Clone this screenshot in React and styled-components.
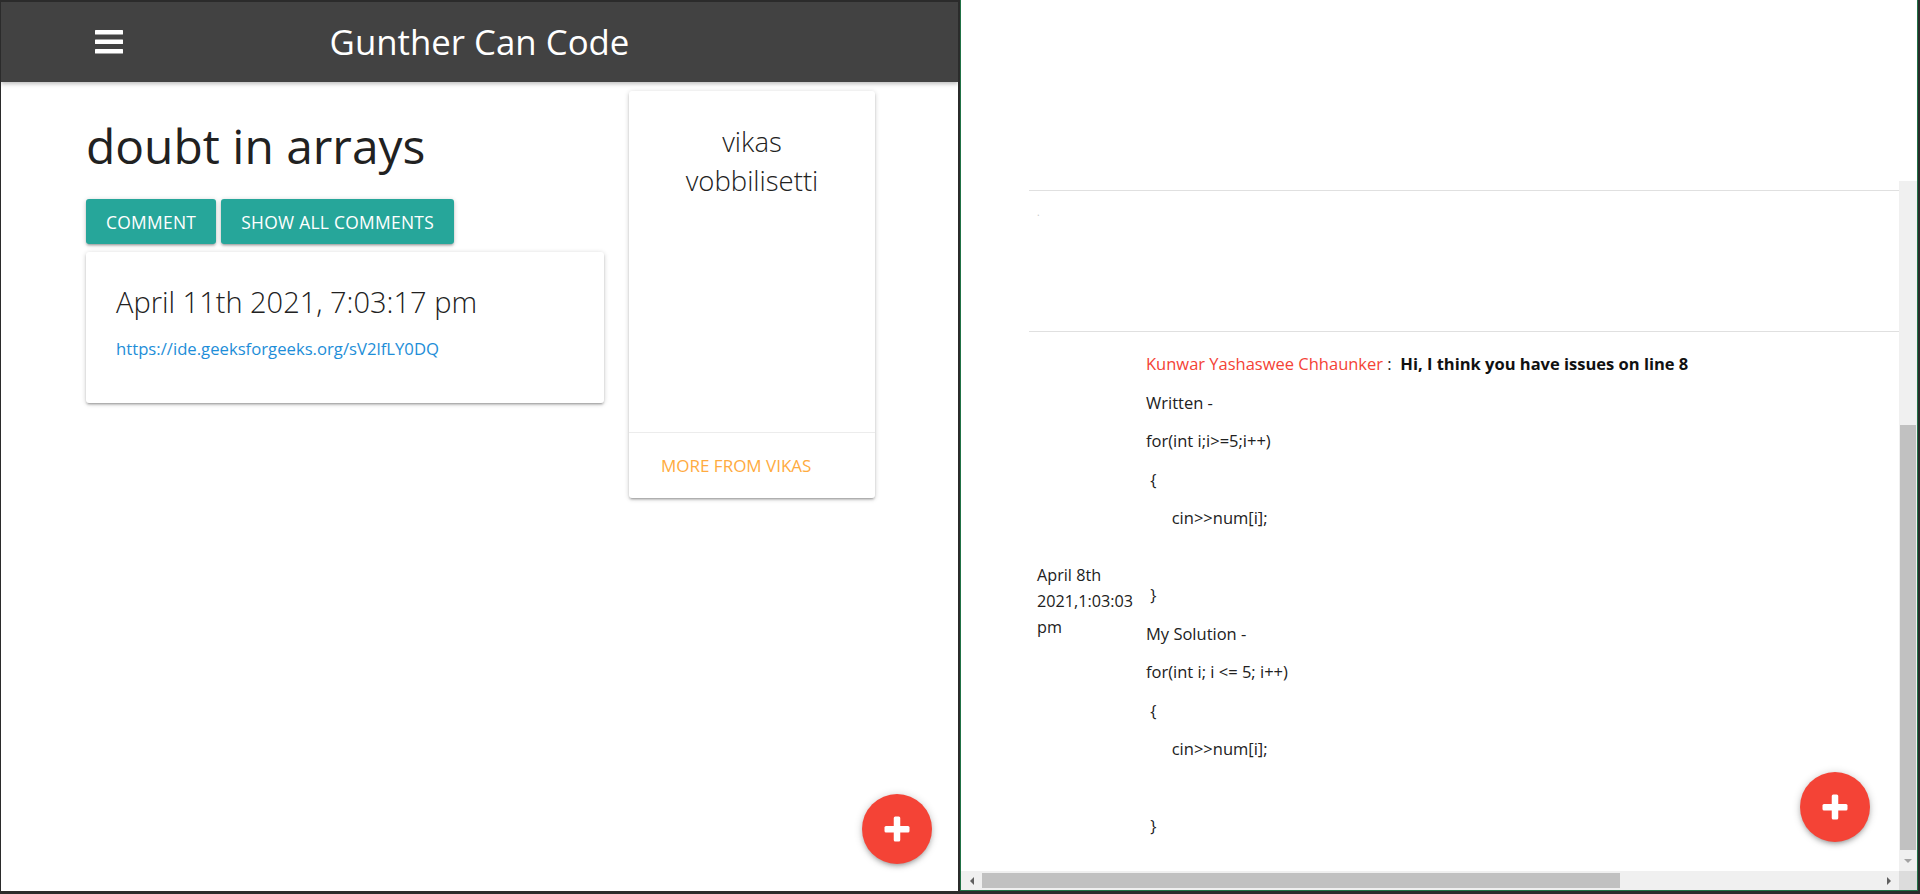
import React from 'react';
import styled, { createGlobalStyle } from 'styled-components';

const GlobalStyle = createGlobalStyle`
  html, body {
    margin: 0;
    padding: 0;
  }
  body {
    background: #2b2b2b;
    font-family: 'Open Sans', 'Noto Sans', sans-serif;
    overflow: hidden;
  }
  * {
    box-sizing: border-box;
  }
`;

const shadow1 = '0 2px 2px 0 rgba(0,0,0,0.14), 0 3px 1px -2px rgba(0,0,0,0.12), 0 1px 5px 0 rgba(0,0,0,0.2)';

const Desktop = styled.div`
  width: 1920px;
  height: 894px;
  display: flex;
  align-items: flex-start;
  background: #2b2b2b;
  overflow: hidden;
`;

/* ---------- left window ---------- */

const LeftWindow = styled.div`
  position: relative;
  width: 957px;
  height: 889px;
  margin: 2px 2px 0 1px;
  background: #fff;
  display: flex;
  flex-direction: column;
  overflow: hidden;
`;

const Navbar = styled.nav`
  height: 80px;
  flex: none;
  background: #424242;
  display: grid;
  grid-template-columns: 1fr auto 1fr;
  align-items: center;
  box-shadow: 0 2px 4px rgba(0,0,0,0.25);
  position: relative;
  z-index: 1;
`;

const MenuButton = styled.div`
  padding-left: 94px;
  display: flex;
  align-items: center;
  svg {
    display: block;
  }
`;

const Brand = styled.div`
  color: #fff;
  font-size: 34.8px;
  line-height: 80px;
  white-space: nowrap;
`;

const Main = styled.div`
  display: flex;
  align-items: flex-start;
  padding-left: 85px;
`;

const PostColumn = styled.div`
  width: 518px;
`;

const Title = styled.h1`
  margin: 38px 0 0;
  font-size: 47.9px;
  line-height: 52px;
  font-weight: 400;
  color: #212121;
`;

const ButtonRow = styled.div`
  display: flex;
  gap: 5px;
  margin-top: 27px;
`;

const Btn = styled.button`
  height: 45px;
  padding: 0 20px;
  border: none;
  border-radius: 3px;
  background: #26a69a;
  color: #fff;
  font-family: inherit;
  font-size: 17.4px;
  letter-spacing: 0.3px;
  text-transform: uppercase;
  box-shadow: ${shadow1};
`;

const Card = styled.div`
  background: #fff;
  border-radius: 3px;
  box-shadow: ${shadow1};
`;

const PostCard = styled(Card)`
  margin-top: 8px;
  height: 151px;
  padding: 30px;
`;

const PostDate = styled.div`
  font-size: 29px;
  font-weight: 300;
  line-height: 40px;
  color: #212121;
`;

const PostLink = styled.a`
  display: block;
  margin-top: 13px;
  font-size: 16.7px;
  line-height: 27px;
  color: #1e8ed8;
  text-decoration: none;
`;

const AuthorCard = styled(Card)`
  width: 246px;
  height: 407px;
  margin: 9px 0 0 25px;
  display: flex;
  flex-direction: column;
`;

const AuthorName = styled.div`
  flex: 1;
  padding: 31px 24px 0;
  text-align: center;
  font-size: 27.5px;
  font-weight: 300;
  line-height: 39px;
  color: #212121;
`;

const CardAction = styled.div`
  border-top: 1px solid rgba(160,160,160,0.2);
  padding: 18px 30px 17px 32px;
  font-size: 17px;
  line-height: 30px;
  color: #ffab40;
  text-transform: uppercase;
`;

const Fab = styled.button`
  position: absolute;
  right: ${p => p.$right}px;
  bottom: ${p => p.$bottom}px;
  width: 70px;
  height: 70px;
  border: none;
  border-radius: 50%;
  background: #f44336;
  display: flex;
  align-items: center;
  justify-content: center;
  box-shadow: 0 3px 4px 0 rgba(0,0,0,0.14), 0 3px 3px -2px rgba(0,0,0,0.12), 0 1px 8px 0 rgba(0,0,0,0.2);
  z-index: 2;
  svg {
    display: block;
  }
`;

/* ---------- right window ---------- */

const RightWindow = styled.div`
  width: 958px;
  height: 891px;
  border: 1px solid #217346;
  border-top: none;
  background: #fff;
  display: flex;
  flex-direction: column;
`;

const TopSpace = styled.div`
  height: 181px;
  flex: none;
`;

const ScrollPane = styled.div`
  flex: 1;
  display: grid;
  grid-template-columns: 1fr 18px;
  grid-template-rows: 1fr 19px;
  min-height: 0;
`;

const Viewport = styled.div`
  position: relative;
  overflow: hidden;
`;

const Table = styled.div`
  margin-left: 68px;
`;

const Row = styled.div`
  border-bottom: 1px solid #e0e0e0;
  height: ${p => p.$h}px;
`;

const Dot = styled.div`
  padding: 14px 0 0 8px;
  font-size: 10px;
  color: #c8c8c8;
`;

const CommentRow = styled.div`
  display: flex;
  align-items: center;
  padding-top: 13px;
`;

const DateCell = styled.div`
  width: 117px;
  flex: none;
  padding: 12px 5px 0 8px;
  font-size: 16.2px;
  line-height: 26px;
  color: #212121;
`;

const BodyCell = styled.div`
  font-size: 16.5px;
  color: #212121;
`;

const Line = styled.p`
  margin: 0;
  height: 38.5px;
  line-height: 38.5px;
  white-space: pre;
`;

const Author = styled.span`
  color: #f44336;
`;

const Strong = styled.b`
  font-weight: 700;
  color: #111;
`;

const VBar = styled.div`
  background: #f0f0f0;
  display: flex;
  flex-direction: column;
  padding: 0 1px;
`;

const VThumb = styled.div`
  margin-top: 244px;
  height: 425px;
  background: #c1c1c1;
`;

const ArrowBox = styled.div`
  flex: 1;
  display: flex;
  align-items: center;
  justify-content: center;
`;

const HBar = styled.div`
  background: #f0f0f0;
  display: flex;
  align-items: center;
`;

const HArrow = styled.div`
  width: 21px;
  height: 19px;
  display: flex;
  align-items: center;
  justify-content: center;
  flex: none;
`;

const HThumb = styled.div`
  width: 638px;
  height: 15px;
  background: #c1c1c1;
`;

const HSpacer = styled.div`
  flex: 1;
`;

const Corner = styled.div`
  background: #dcdcdc;
`;

const PlusIcon = () => (
  <svg width="26" height="26" viewBox="0 0 26 26">
    <rect x="0.5" y="10" width="25" height="6.5" rx="1.5" fill="#fff" />
    <rect x="9.75" y="0.5" width="6.5" height="25" rx="1.5" fill="#fff" />
  </svg>
);

const MenuIcon = () => (
  <svg width="28" height="24" viewBox="0 0 28 24">
    <rect x="0" y="0" width="28" height="4.5" rx="0.5" fill="#fff" />
    <rect x="0" y="9.5" width="28" height="4.5" rx="0.5" fill="#fff" />
    <rect x="0" y="19" width="28" height="4.5" rx="0.5" fill="#fff" />
  </svg>
);

const Triangle = ({ dir, color }) => {
  const pts = {
    left: '5,0 5,8 1,4',
    right: '1,0 1,8 5,4',
    down: '0,1 8,1 4,5',
  }[dir];
  const w = dir === 'down' ? 8 : 6;
  const h = dir === 'down' ? 6 : 8;
  return (
    <svg width={w} height={h} viewBox={`0 0 ${w} ${h}`}>
      <polygon points={pts} fill={color} />
    </svg>
  );
};

const codeLines = [
  null,
  'Written -',
  'for(int i;i>=5;i++)',
  '\u00a0{',
  '\u00a0\u00a0\u00a0\u00a0\u00a0\u00a0cin>>num[i];',
  '',
  '\u00a0}',
  'My Solution -',
  'for(int i; i <= 5; i++)',
  '\u00a0{',
  '\u00a0\u00a0\u00a0\u00a0\u00a0\u00a0cin>>num[i];',
  '',
  '\u00a0}',
];

const App = () => {
  return (
    <Desktop>
      <GlobalStyle />
      <LeftWindow>
        <Navbar>
          <MenuButton><MenuIcon /></MenuButton>
          <Brand>Gunther Can Code</Brand>
          <div />
        </Navbar>
        <Main>
          <PostColumn>
            <Title>doubt in arrays</Title>
            <ButtonRow>
              <Btn>Comment</Btn>
              <Btn>Show all comments</Btn>
            </ButtonRow>
            <PostCard>
              <PostDate>April 11th 2021, 7:03:17 pm</PostDate>
              <PostLink href="#">https://ide.geeksforgeeks.org/sV2lfLY0DQ</PostLink>
            </PostCard>
          </PostColumn>
          <AuthorCard>
            <AuthorName>vikas vobbilisetti</AuthorName>
            <CardAction>More from vikas</CardAction>
          </AuthorCard>
        </Main>
        <Fab $right={26} $bottom={27}><PlusIcon /></Fab>
      </LeftWindow>

      <RightWindow>
        <TopSpace />
        <ScrollPane>
          <Viewport>
            <Table>
              <Row $h={10} />
              <Row $h={141}><Dot>.</Dot></Row>
              <CommentRow>
                <DateCell>April 8th 2021,1:03:03 pm</DateCell>
                <BodyCell>
                  {codeLines.map((l, i) =>
                    i === 0 ? (
                      <Line key={i}>
                        <Author>Kunwar Yashaswee Chhaunker</Author> :  <Strong>Hi, I think you have issues on line 8</Strong>
                      </Line>
                    ) : (
                      <Line key={i}>{l}</Line>
                    )
                  )}
                </BodyCell>
              </CommentRow>
            </Table>
            <Fab $right={29} $bottom={29}><PlusIcon /></Fab>
          </Viewport>
          <VBar>
            <VThumb />
            <ArrowBox><Triangle dir="down" color="#a3a3a3" /></ArrowBox>
          </VBar>
          <HBar>
            <HArrow><Triangle dir="left" color="#606060" /></HArrow>
            <HThumb />
            <HSpacer />
            <HArrow><Triangle dir="right" color="#606060" /></HArrow>
          </HBar>
          <Corner />
        </ScrollPane>
      </RightWindow>
    </Desktop>
  );
};

export default App;
